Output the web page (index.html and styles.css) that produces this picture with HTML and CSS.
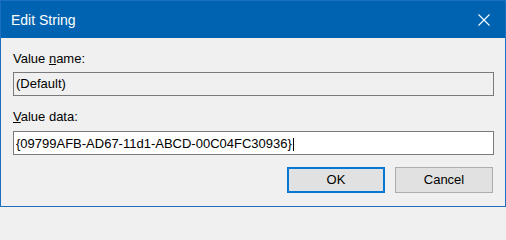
FILE: index.html
```html
<!DOCTYPE html>
<html>
<head>
<meta charset="utf-8">
<title>Edit String</title>
<link rel="stylesheet" href="styles.css">
</head>
<body>
<div class="window">
  <div class="titlebar">
    <span class="title">Edit String</span>
    <svg class="close" width="12" height="12" viewBox="0 0 12 12">
      <path d="M0.5 0.5 L11.5 11.5 M11.5 0.5 L0.5 11.5" stroke="#ffffff" stroke-width="1.1" fill="none"/>
    </svg>
  </div>
  <div class="content">
    <div class="label label-first">Value <u>n</u>ame:</div>
    <div class="field field-disabled">(Default)</div>
    <div class="label label-second"><u>V</u>alue data:</div>
    <div class="field field-edit">{09799AFB-AD67-11d1-ABCD-00C04FC30936}<span class="caret"></span></div>
    <div class="buttons">
      <div class="btn btn-default">OK</div>
      <div class="btn">Cancel</div>
    </div>
  </div>
</div>
</body>
</html>
```

FILE: styles.css
```css
html, body {
  margin: 0;
  padding: 0;
  background: #f0f0f0;
}
.window {
  width: 506px;
  height: 207px;
  box-sizing: border-box;
  border: 1px solid #1b6ec0;
  background: #f0f0f0;
  font-family: "Liberation Sans", Arial, sans-serif;
  color: #000;
  display: flex;
  flex-direction: column;
}
.titlebar {
  height: 37px;
  flex: none;
  background: #0063b1;
  display: flex;
  align-items: center;
  padding-left: 10px;
  padding-right: 15px;
}
.title {
  font-size: 14px;
  line-height: 16px;
  color: #ffffff;
  flex: 1;
}
.close {
  display: block;
  flex: none;
}
.content {
  padding: 0 11px 0 12px;
  display: flex;
  flex-direction: column;
}
.label {
  font-size: 13px;
  line-height: 15px;
}
.label u {
  text-underline-offset: 1px;
}
.label-first {
  margin-top: 13px;
}
.label-second {
  margin-top: 13px;
}
.field {
  margin-top: 6px;
  height: 24px;
  box-sizing: border-box;
  border: 1px solid #7a7a7a;
  font-size: 13px;
  line-height: 20px;
  padding: 1px 2px 0 2px;
  white-space: nowrap;
  overflow: hidden;
}
.field-disabled {
  background: #f0f0f0;
}
.field-edit {
  margin-top: 7px;
  background: #ffffff;
  padding-top: 2px;
}
.caret {
  display: inline-block;
  width: 1px;
  height: 13px;
  background: #000;
  vertical-align: -3px;
  margin-left: 1px;
}
.buttons {
  margin-top: 12px;
  margin-right: 1px;
  display: flex;
  justify-content: flex-end;
  gap: 10px;
}
.btn {
  width: 98px;
  height: 26px;
  box-sizing: border-box;
  border: 1px solid #adadad;
  background: #e1e1e1;
  font-size: 13px;
  line-height: 24px;
  text-align: center;
}
.btn-default {
  border: 2px solid #0078d7;
  line-height: 22px;
}
```
